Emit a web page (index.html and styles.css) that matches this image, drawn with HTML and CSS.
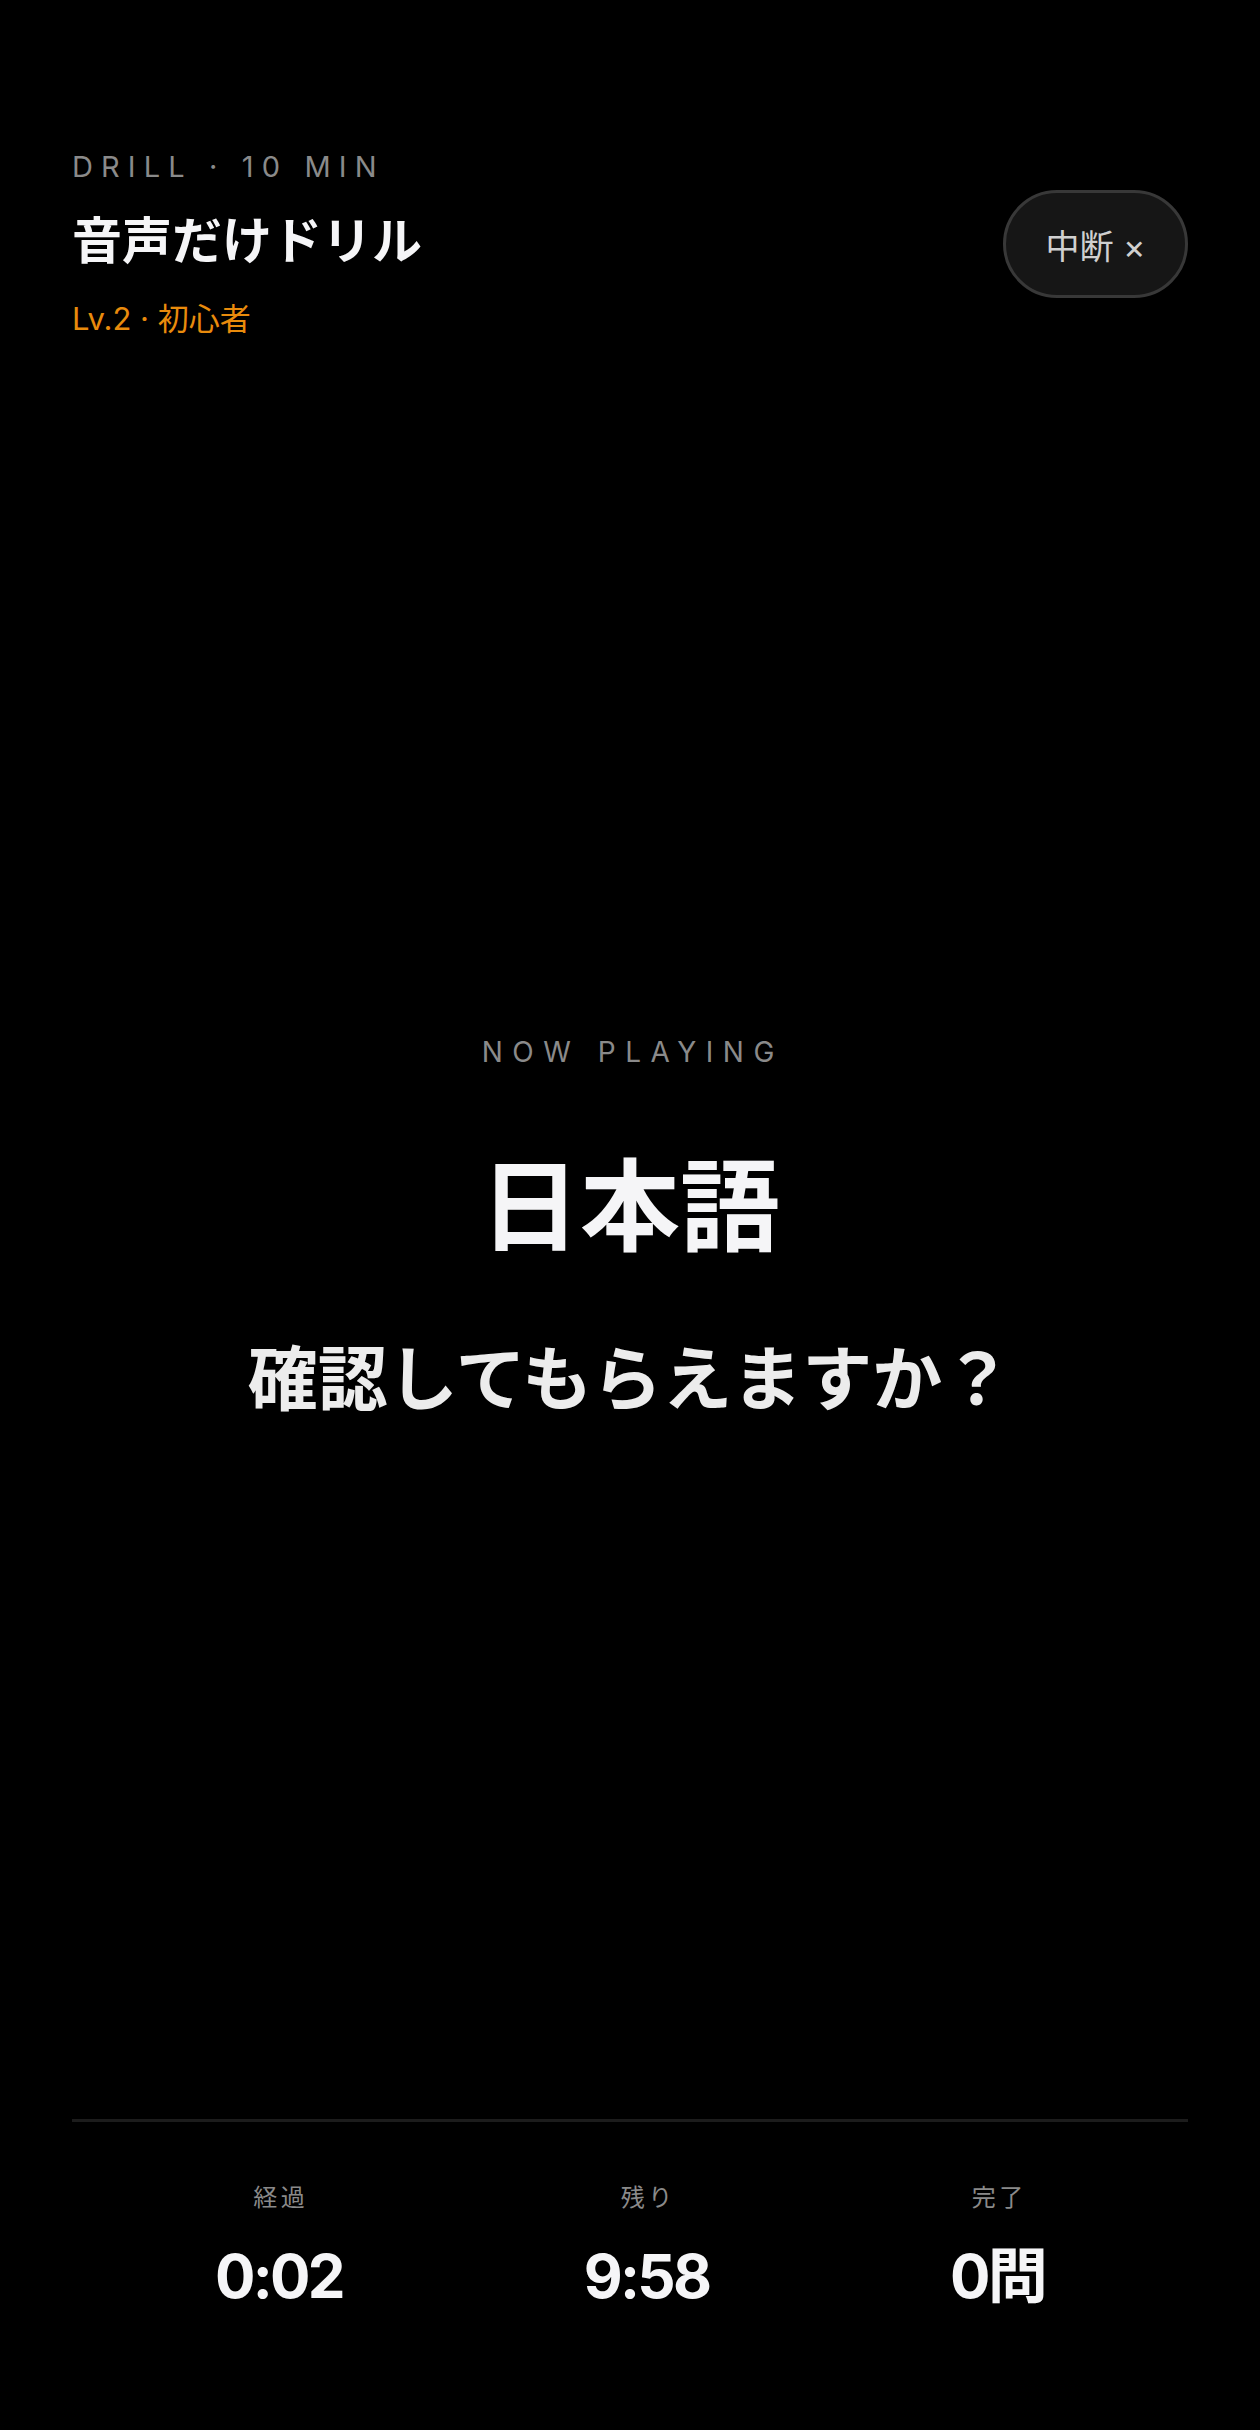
FILE: index.html
```html
<!DOCTYPE html>
<html lang="ja">
<head>
<meta charset="utf-8">
<title>音声だけドリル</title>
<link rel="stylesheet" href="styles.css">
</head>
<body>
<div class="page">
  <header class="header">
    <div class="heading">
      <div class="eyebrow">DRILL · 10 MIN</div>
      <h1 class="title">音声だけドリル</h1>
      <div class="level">Lv.2 · 初心者</div>
    </div>
    <button class="stop-btn" type="button">中断 ×</button>
  </header>

  <main class="stage">
    <div class="now">NOW PLAYING</div>
    <div class="word">日本語</div>
    <div class="sentence">確認してもらえますか？</div>
  </main>

  <footer class="footer">
    <div class="divider"></div>
    <div class="stats">
      <div class="stat">
        <div class="stat-label">経過</div>
        <div class="stat-value">0:02</div>
      </div>
      <div class="stat">
        <div class="stat-label">残り</div>
        <div class="stat-value">9:58</div>
      </div>
      <div class="stat">
        <div class="stat-label">完了</div>
        <div class="stat-value">0問</div>
      </div>
    </div>
  </footer>
</div>
</body>
</html>
```

FILE: styles.css
```css
html, body {
  margin: 0;
  padding: 0;
  background: #000;
}

body {
  font-family: Inter, "Noto Sans CJK JP", sans-serif;
  color: #f5f5f7;
}

.page {
  box-sizing: border-box;
  min-height: 2430px;
  display: flex;
  flex-direction: column;
  padding: 149px 72px 0;
}

.header {
  display: flex;
  justify-content: space-between;
  align-items: center;
}

.heading {
  display: flex;
  flex-direction: column;
}

.eyebrow {
  font-size: 29px;
  line-height: 36px;
  letter-spacing: 0.28em;
  color: #8a8a8a;
}

.title {
  margin: 26px 0 0;
  font-size: 50px;
  line-height: 60px;
  font-weight: 600;
  color: #f5f5f7;
}

.level {
  margin-top: 28px;
  font-size: 31px;
  line-height: 40px;
  color: #e98b0c;
}

.stop-btn {
  box-sizing: border-box;
  width: 185px;
  height: 108px;
  border-radius: 54px;
  border: 3px solid #383838;
  background: #161616;
  color: #d0d0d0;
  font-family: Inter, "Noto Sans CJK JP", sans-serif;
  font-size: 34px;
  padding: 0;
}

.stage {
  flex: 1;
  display: flex;
  flex-direction: column;
  align-items: center;
  justify-content: center;
  text-align: center;
}

.now {
  font-size: 28px;
  line-height: 34px;
  letter-spacing: 0.34em;
  padding-left: 0.2em;
  color: #8a8a8a;
}

.word {
  margin-top: 78px;
  font-size: 100px;
  line-height: 120px;
  font-weight: 700;
  color: #f5f5f7;
}

.sentence {
  margin-top: 69px;
  font-size: 70px;
  line-height: 88px;
  font-weight: 700;
  color: #ececec;
}

.footer {
  display: flex;
  flex-direction: column;
  padding-bottom: 118px;
}

.divider {
  height: 3px;
  background: #1c1c1c;
}

.stats {
  display: flex;
  justify-content: space-between;
  padding: 60px 143px 0;
}

.stat {
  display: flex;
  flex-direction: column;
  align-items: center;
}

.stat-label {
  font-size: 24px;
  line-height: 32px;
  letter-spacing: 0.15em;
  padding-left: 0.15em;
  color: #8a8a8a;
}

.stat-value {
  margin-top: 26px;
  font-size: 60px;
  line-height: 72px;
  font-weight: 700;
  letter-spacing: -0.045em;
  color: #f5f5f7;
}
```
